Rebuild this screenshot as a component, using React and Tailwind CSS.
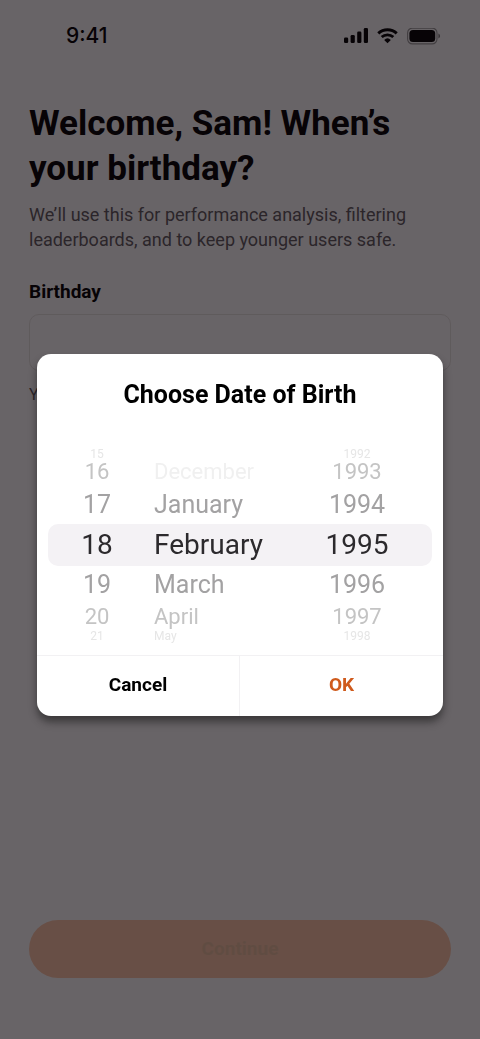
import React, { useState } from 'react';

const DAYS = Array.from({ length: 31 }, (_, i) => String(i + 1));
const MONTHS = [
  'December',
  'January',
  'February',
  'March',
  'April',
  'May',
  'June',
  'July',
  'August',
  'September',
  'October',
  'November',
  'December',
];
const YEARS = Array.from({ length: 100 }, (_, i) => String(1920 + i));

// rows shrink and fade the further they are from the selected one
const ROWS = [
  { offset: -3, className: 'h-[10px] text-[12px] text-[#e6e6e6]' },
  { offset: -2, className: 'h-[27px] text-[22px] text-[#c4c4c4]' },
  { offset: -1, className: 'h-[38px] text-[25px] text-[#a3a2a3]' },
  { offset: 0, className: 'h-[42px] text-[28px] text-[#2c2a2d]' },
  { offset: 1, className: 'h-[38px] text-[25px] text-[#a3a2a3]' },
  { offset: 2, className: 'h-[27px] text-[22px] text-[#c4c4c4]' },
  { offset: 3, className: 'h-[10px] text-[12px] text-[#e6e6e6]' },
];

function Wheel({ label, items, selected, onSelect, align, disabledIndex }) {
  return (
    <ul aria-label={label} className="relative">
      {ROWS.map((row) => {
        const index = selected + row.offset;
        const value = items[index];
        return (
          <li key={row.offset} className={`flex items-center ${align} ${row.className}`}>
            {value && (
              <button
                type="button"
                disabled={index === disabledIndex}
                aria-pressed={row.offset === 0}
                onClick={() => onSelect(index)}
                className="leading-none disabled:text-[#f0f0f0]"
              >
                {value}
              </button>
            )}
          </li>
        );
      })}
    </ul>
  );
}

function StatusBar() {
  return (
    <div className="flex items-center justify-between pt-6 pr-[39px] pl-[66px] text-black">
      <span className="font-[Inter,sans-serif] text-[21px] leading-6 font-medium">9:41</span>
      <div className="flex items-center gap-[9px]">
        <svg width="24" height="16" viewBox="0 0 24 16" fill="currentColor" aria-hidden="true">
          <rect x="0" y="9.5" width="4.2" height="5.5" rx="1.3" />
          <rect x="6.6" y="7" width="4.2" height="8" rx="1.3" />
          <rect x="13.2" y="3.5" width="4.2" height="11.5" rx="1.3" />
          <rect x="19.8" y="0" width="4.2" height="15" rx="1.3" />
        </svg>
        <svg width="21" height="16" viewBox="0 0 21 16" fill="none" aria-hidden="true">
          <path d="M1.3 5.4a13.2 13.2 0 0 1 18.4 0" stroke="currentColor" strokeWidth="3" />
          <path d="M4.7 9.1a8.4 8.4 0 0 1 11.6 0" stroke="currentColor" strokeWidth="2.8" />
          <path d="M10.5 15.2 7.2 11.9a4.8 4.8 0 0 1 6.6 0z" fill="currentColor" />
        </svg>
        <svg width="34" height="17" viewBox="0 0 34 17" fill="none" aria-hidden="true">
          <rect x="0.6" y="0.1" width="29.4" height="15.8" rx="4.8" stroke="currentColor" strokeOpacity="0.4" strokeWidth="1.1" />
          <rect x="2.4" y="1.9" width="25.8" height="12.2" rx="3.6" fill="currentColor" />
          <path d="M31.4 5.5v5c1-.4 1.700-1.400 1.700-2.500s-.7-2.100-1.700-2.500z" fill="currentColor" fillOpacity="0.5" />
        </svg>
      </div>
    </div>
  );
}

export default function App() {
  const [day, setDay] = useState(17);
  const [month, setMonth] = useState(2);
  const [year, setYear] = useState(75);
  const [open, setOpen] = useState(true);
  const [birthday, setBirthday] = useState('');

  const handleConfirm = () => {
    setBirthday(`${MONTHS[month]} ${DAYS[day]}, ${YEARS[year]}`);
    setOpen(false);
  };

  return (
    <div className="flex min-h-screen flex-col bg-white font-[Roboto,sans-serif]">
      <StatusBar />

      <main className="flex flex-1 flex-col px-[29px] pt-[53px] pb-[61px]">
        <h1 className="text-[35px] leading-[45px] font-bold text-black">
          Welcome, Sam! When’s your birthday?
        </h1>
        <p className="mt-[11px] text-[18px] leading-[25px] text-[#5f5b60]">
          We’ll use this for performance analysis, filtering leaderboards, and to keep younger users safe.
        </p>

        <label htmlFor="birthday" className="mt-[28px] text-[19px] leading-6 font-bold text-black">
          Birthday
        </label>
        <input
          id="birthday"
          type="text"
          readOnly
          value={birthday}
          onClick={() => setOpen(true)}
          className="mt-[10px] h-[57px] w-full rounded-[10px] border border-[#e8e6e3] px-4 text-[18px]"
        />
        <p className="mt-[14px] text-[16px] leading-5 text-[#5f5b60]">
          Your birthday won’t be shared.
        </p>

        <button
          type="button"
          disabled={!birthday}
          className="mt-auto h-[58px] w-full rounded-full bg-[#fc5200] text-[19px] font-bold text-white disabled:bg-[#fec8a8] disabled:text-[#ebc19f]"
        >
          Continue
        </button>
      </main>

      {open && (
        <div className="fixed inset-0 flex items-center justify-center bg-[#0c050a]/62 px-[37px] pt-[30px]">
          <div
            role="dialog"
            aria-modal="true"
            aria-labelledby="dialog-title"
            className="w-full overflow-hidden rounded-[14px] bg-white shadow-[0_6px_8px_rgba(0,0,0,0.45)]"
          >
            <h2 id="dialog-title" className="pt-[25px] text-center text-[25px] leading-8 font-bold text-black">
              Choose Date of Birth
            </h2>

            <div className="relative mx-[11px] mt-[38px] mb-[14px] grid grid-cols-[98fr_136fr_150fr]">
              <div className="absolute inset-x-0 top-[75px] h-[42px] rounded-[10px] bg-[#f4f2f5]" />
              <Wheel label="Day" items={DAYS} selected={day} onSelect={setDay} align="justify-center" />
              <Wheel
                label="Month"
                items={MONTHS}
                selected={month}
                onSelect={setMonth}
                align="justify-start pl-2"
                disabledIndex={0}
              />
              <Wheel label="Year" items={YEARS} selected={year} onSelect={setYear} align="justify-center" />
            </div>

            <div className="grid grid-cols-2 divide-x divide-[#f2f1f3] border-t border-[#f2f1f3] text-[19px] font-bold">
              <button type="button" onClick={() => setOpen(false)} className="h-[60px] text-black">
                Cancel
              </button>
              <button type="button" onClick={handleConfirm} className="h-[60px] text-[#cf5a1c]">
                OK
              </button>
            </div>
          </div>
        </div>
      )}
    </div>
  );
}
